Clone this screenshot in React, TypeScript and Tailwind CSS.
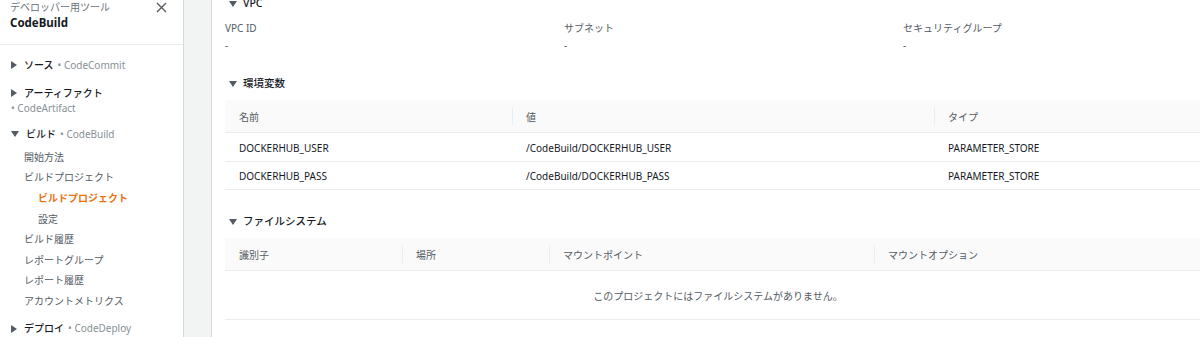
import React from "react";

const FONT = { fontFamily: '"Noto Sans", "Noto Sans CJK JP", sans-serif' };

function TriDown({ className = "" }: { className?: string }) {
  return (
    <svg width="8" height="6" viewBox="0 0 8 6" className={className}>
      <path d="M0 0 L8 0 L4 6 Z" fill="#545b64" />
    </svg>
  );
}
function TriRight({ className = "" }: { className?: string }) {
  return (
    <svg width="6" height="8" viewBox="0 0 6 8" className={className}>
      <path d="M0 0 L6 4 L0 8 Z" fill="#545b64" />
    </svg>
  );
}

function NavSection({ title, service, open }: { title: string; service: string; open?: boolean }) {
  return (
    <div className="flex items-center h-[20px] pl-[11px]">
      {open ? <TriDown /> : <TriRight />}
      <span className="ml-[7px] text-[10px] text-[#16191f] font-medium">{title}</span>
      <span className="ml-[4px] text-[10px] text-[#879196]">• {service}</span>
    </div>
  );
}

function NavItem({ label, indent, active }: { label: string; indent?: boolean; active?: boolean }) {
  return (
    <div
      className={`flex items-center h-[20.6px] text-[10px] ${indent ? "pl-[38px]" : "pl-[24px]"} ${
        active ? "text-[#ec7211] font-bold" : "text-[#545b64]"
      }`}
    >
      {label}
    </div>
  );
}

function SectionTitle({ label, className = "" }: { label: string; className?: string }) {
  return (
    <div className={`flex items-center h-[16px] gap-[6px] pl-[4px] ${className}`}>
      <TriDown />
      <span className="text-[10.5px] text-[#16191f] font-medium">{label}</span>
    </div>
  );
}

function HeaderCell({ label, first }: { label: string; first?: boolean }) {
  return (
    <div className="relative flex items-center h-full pl-[14px] pt-[2px] text-[10px] text-[#545b64]">
      {!first && <div className="absolute left-0 top-[8px] h-[17px] w-px bg-[#eaeded]" />}
      {label}
    </div>
  );
}

export default function App() {
  const envRows = [
    ["DOCKERHUB_USER", "/CodeBuild/DOCKERHUB_USER", "PARAMETER_STORE"],
    ["DOCKERHUB_PASS", "/CodeBuild/DOCKERHUB_PASS", "PARAMETER_STORE"],
  ];
  return (
    <div className="w-[1200px] h-[337px] overflow-hidden flex bg-white" style={FONT}>
      {/* Sidebar */}
      <div className="w-[184px] shrink-0 border-r border-[#d5dbdb] bg-white">
        <div className="border-b border-[#eaeded] pb-[13px]">
          <div className="flex items-center justify-between h-[16px] mt-[-1px] pl-[10px] pr-[16px]">
            <span className="text-[10px] text-[#687078]">デベロッパー用ツール</span>
            <svg width="11" height="11" viewBox="0 0 11 11">
              <path d="M1 1 L10 10 M10 1 L1 10" stroke="#545b64" strokeWidth="1.4" />
            </svg>
          </div>
          <div className="h-[16px] flex items-center pl-[10px] text-[11.5px] font-bold text-[#16191f]">
            CodeBuild
          </div>
        </div>
        <div className="mt-[10px]">
          <NavSection title="ソース" service="CodeCommit" />
        </div>
        <div className="mt-[9px]">
          <div className="flex items-center h-[18px] pl-[11px]">
            <TriRight />
            <span className="ml-[7px] text-[10px] text-[#16191f] font-medium">アーティファクト</span>
          </div>
          <div className="h-[12px] flex items-center pl-[11px] text-[10px] text-[#879196]">• CodeArtifact</div>
        </div>
        <div className="mt-[10px]">
          <NavSection title="ビルド" service="CodeBuild" open />
        </div>
        <div className="mt-[3px]">
          <NavItem label="開始方法" />
          <NavItem label="ビルドプロジェクト" />
          <NavItem label="ビルドプロジェクト" indent active />
          <NavItem label="設定" indent />
          <NavItem label="ビルド履歴" />
          <NavItem label="レポートグループ" />
          <NavItem label="レポート履歴" />
          <NavItem label="アカウントメトリクス" />
        </div>
        <div className="mt-[7px]">
          <NavSection title="デプロイ" service="CodeDeploy" />
        </div>
      </div>

      {/* Gutter */}
      <div className="w-[28px] shrink-0 bg-[#f2f3f3] border-r border-[#d5dbdb]" />

      {/* Content */}
      <div className="shrink-0 w-[1000px] pl-[13px]">
        <div className="w-[986px]">
          <SectionTitle label="VPC" className="mt-[-4px]" />
          <div className="grid grid-cols-3 gap-x-[31px] mt-[8px]">
            {["VPC ID", "サブネット", "セキュリティグループ"].map((l) => (
              <div key={l}>
                <div className="h-[16px] flex items-center text-[10px] text-[#545b64]">{l}</div>
                <div className="h-[16px] mt-[1px] flex items-center text-[10px] text-[#545b64]">-</div>
              </div>
            ))}
          </div>

          <SectionTitle label="環境変数" className="mt-[23px]" />
          <div className="mt-[8px]">
            <div className="grid grid-cols-[287px_422px_1fr] h-[33px] bg-[#fafafa] border-b border-[#eaeded]">
              <HeaderCell label="名前" first />
              <HeaderCell label="値" />
              <HeaderCell label="タイプ" />
            </div>
            {envRows.map((r, i) => (
              <div
                key={r[0]}
                className={`grid grid-cols-[287px_422px_1fr] border-b border-[#eaeded] ${i === 0 ? "h-[29px]" : "h-[28px]"}`}
              >
                {r.map((c, j) => (
                  <div key={j} className="flex items-center pl-[14px] pt-[2px] text-[10px] text-[#16191f]">
                    {c}
                  </div>
                ))}
              </div>
            ))}
          </div>

          <SectionTitle label="ファイルシステム" className="mt-[24px]" />
          <div className="mt-[8px]">
            <div className="grid grid-cols-[177px_147px_325px_1fr] h-[33px] bg-[#fafafa] border-b border-[#eaeded]">
              <HeaderCell label="識別子" first />
              <HeaderCell label="場所" />
              <HeaderCell label="マウントポイント" />
              <HeaderCell label="マウントオプション" />
            </div>
            <div className="h-[49px] pt-[2px] border-b border-[#eaeded] flex items-center justify-center text-[10px] text-[#545b64]">
              このプロジェクトにはファイルシステムがありません。
            </div>
          </div>
        </div>
      </div>
    </div>
  );
}
